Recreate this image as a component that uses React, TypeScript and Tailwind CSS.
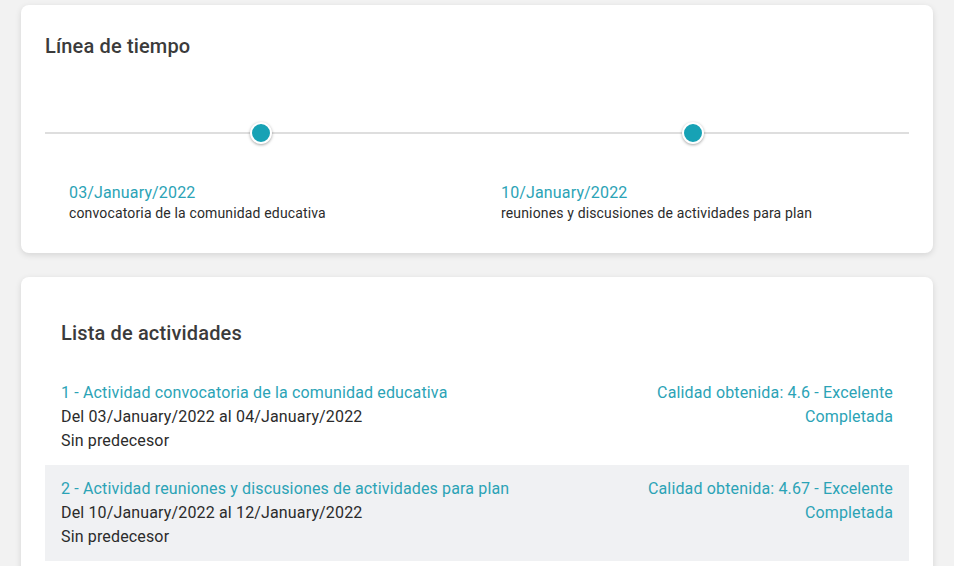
const hitos = [
  { fecha: '03/January/2022', texto: 'convocatoria de la comunidad educativa' },
  { fecha: '10/January/2022', texto: 'reuniones y discusiones de actividades para plan' },
]

const actividades = [
  {
    titulo: '1 - Actividad convocatoria de la comunidad educativa',
    rango: 'Del 03/January/2022 al 04/January/2022',
    calidad: 'Calidad obtenida: 4.6 - Excelente',
  },
  {
    titulo: '2 - Actividad reuniones y discusiones de actividades para plan',
    rango: 'Del 10/January/2022 al 12/January/2022',
    calidad: 'Calidad obtenida: 4.67 - Excelente',
  },
]

export default function App() {
  return (
    <div className="min-h-screen bg-[#f2f2f2] px-[21px] pt-[5px] pb-6 font-['Roboto',sans-serif] tracking-[0.15px]">
      {/* Timeline card */}
      <section className="rounded-lg bg-white px-6 pt-[30px] pb-[30px] shadow-[0_2px_6px_rgba(0,0,0,0.12)]">
        <h2 className="text-[20px] font-medium leading-[22px] text-[#3b3b3b]">Línea de tiempo</h2>

        <div className="relative mt-[65px]">
          <div className="absolute inset-x-0 top-[10px] h-[2px] bg-[#dedede]" />
          <div className="grid grid-cols-2">
            {hitos.map((h) => (
              <div key={h.fecha} className="relative">
                <div className="flex justify-center">
                  <span className="relative h-[22px] w-[22px] rounded-full border-2 border-white bg-[#17a2b5] shadow-[0_1px_3px_rgba(0,0,0,0.35)]" />
                </div>
                <div className="mt-[38px] pl-6">
                  <p className="text-[16px] leading-[21px] text-[#2ba3b6]">{h.fecha}</p>
                  <p className="mt-[1px] text-[14px] leading-[19px] text-[#2b2b2b]">{h.texto}</p>
                </div>
              </div>
            ))}
          </div>
        </div>
      </section>

      {/* Activities card */}
      <section className="mt-6 rounded-lg bg-white px-6 pt-[44px] pb-6 shadow-[0_2px_6px_rgba(0,0,0,0.12)]">
        <h2 className="px-4 text-[20px] font-medium leading-[24px] text-[#3b3b3b]">Lista de actividades</h2>

        <div className="mt-[24px]">
          {actividades.map((a, i) => (
            <div
              key={a.titulo}
              className={`flex justify-between px-4 py-3 text-[16px] leading-[24px] ${i % 2 === 1 ? 'bg-[#f0f1f3]' : ''}`}
            >
              <div>
                <p className="text-[#2ba3b6]">{a.titulo}</p>
                <p className="text-[#2b2b2b]">{a.rango}</p>
                <p className="text-[#2b2b2b]">Sin predecesor</p>
              </div>
              <div className="text-right text-[#2ba3b6]">
                <p>{a.calidad}</p>
                <p>Completada</p>
              </div>
            </div>
          ))}
        </div>
      </section>
    </div>
  )
}
